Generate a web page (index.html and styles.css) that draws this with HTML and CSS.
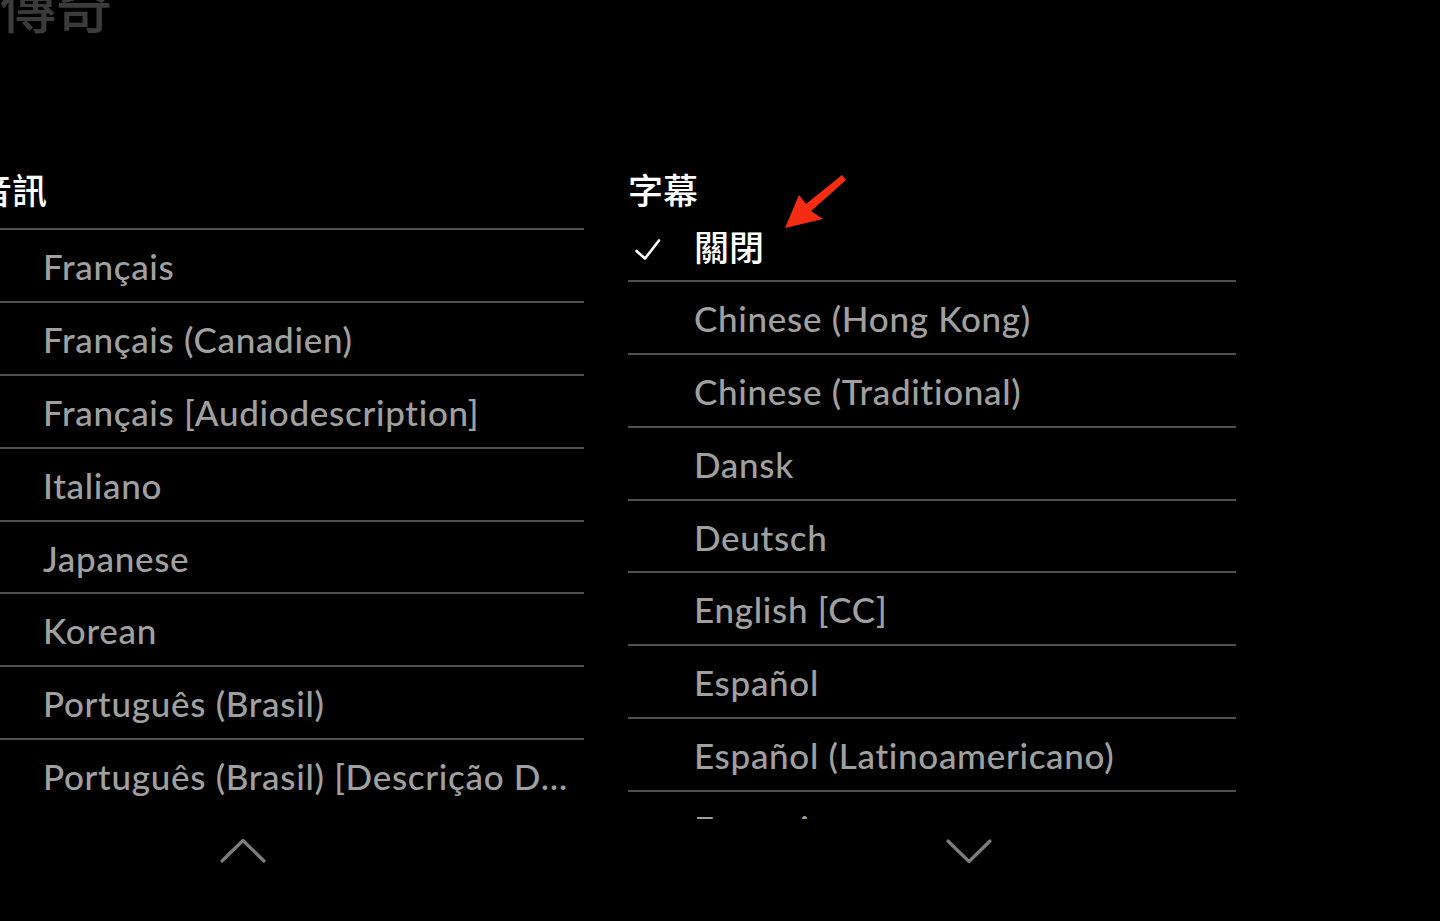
FILE: index.html
```html
<!DOCTYPE html>
<html lang="zh-Hant">
<head>
<meta charset="utf-8">
<title>音訊與字幕</title>
<link rel="stylesheet" href="styles.css">
</head>
<body>
<div class="page">
  <h1 class="title">傳奇</h1>
  <div class="columns">
    <section class="col">
      <h2 class="col-head">音訊</h2>
      <div class="viewport">
        <ul class="list list--scrolled">
          <li class="row"><span class="mark"></span><span class="label">Français</span></li>
          <li class="row"><span class="mark"></span><span class="label">Français (Canadien)</span></li>
          <li class="row"><span class="mark"></span><span class="label">Français [Audiodescription]</span></li>
          <li class="row"><span class="mark"></span><span class="label">Italiano</span></li>
          <li class="row"><span class="mark"></span><span class="label">Japanese</span></li>
          <li class="row"><span class="mark"></span><span class="label">Korean</span></li>
          <li class="row"><span class="mark"></span><span class="label">Português (Brasil)</span></li>
          <li class="row row--last"><span class="mark"></span><span class="label">Português (Brasil) [Descrição Dublada]</span></li>
        </ul>
      </div>
      <div class="pager pager--up">
        <svg class="chev" width="48" height="26" viewBox="0 0 48 26"><path d="M3 23 L24 2.5 L45 23" fill="none" stroke="#7d7d7d" stroke-width="3.2" stroke-linecap="round" stroke-linejoin="round"/></svg>
      </div>
    </section>
    <section class="col">
      <h2 class="col-head">字幕</h2>
      <div class="viewport">
        <ul class="list">
          <li class="row row--selected"><span class="mark"><svg class="check" width="28" height="24" viewBox="0 0 28 24"><path d="M2.5 13 L11 20.5 L25 2.5" fill="none" stroke="#fff" stroke-width="2.6" stroke-linecap="round" stroke-linejoin="round"/></svg></span><span class="label">關閉</span></li>
          <li class="row"><span class="mark"></span><span class="label">Chinese (Hong Kong)</span></li>
          <li class="row"><span class="mark"></span><span class="label">Chinese (Traditional)</span></li>
          <li class="row"><span class="mark"></span><span class="label">Dansk</span></li>
          <li class="row"><span class="mark"></span><span class="label">Deutsch</span></li>
          <li class="row"><span class="mark"></span><span class="label">English [CC]</span></li>
          <li class="row"><span class="mark"></span><span class="label">Español</span></li>
          <li class="row"><span class="mark"></span><span class="label">Español (Latinoamericano)</span></li>
          <li class="row"><span class="mark"></span><span class="label">Français</span></li>
        </ul>
      </div>
      <div class="pager pager--down">
        <svg class="chev" width="48" height="26" viewBox="0 0 48 26"><path d="M3 3 L24 23.5 L45 3" fill="none" stroke="#7d7d7d" stroke-width="3.2" stroke-linecap="round" stroke-linejoin="round"/></svg>
      </div>
    </section>
  </div>
</div>
<svg class="annot-arrow" width="70" height="64" viewBox="0 0 70 64"><polygon points="5,58 19,25 26,34 62,5 66,10 31,41 43,49" fill="#f42c14"/></svg>
</body>
</html>
```

FILE: styles.css
```css
html, body {
  margin: 0;
  padding: 0;
  background: #000;
}
body {
  width: 1440px;
  height: 921px;
  overflow: hidden;
  position: relative;
  font-family: Lato, "Noto Sans CJK TC", sans-serif;
  color: #a0a0a0;
}
.page {
  display: flex;
  flex-direction: column;
}
.title {
  margin: -24px 0 0 0;
  font-family: "Noto Sans CJK TC", sans-serif;
  font-size: 56px;
  line-height: 56px;
  font-weight: 500;
  color: #3b3b3b;
  white-space: nowrap;
}
.columns {
  display: grid;
  grid-template-columns: 607px 608px;
  column-gap: 44px;
  margin-left: -23px;
  padding-top: 137px;
}
.col {
  display: flex;
  flex-direction: column;
  min-width: 0;
}
.col-head {
  margin: 0;
  height: 40px;
  font-family: "Noto Sans CJK TC", sans-serif;
  font-size: 35px;
  line-height: 40px;
  font-weight: 500;
  color: #fff;
  white-space: nowrap;
}
.viewport {
  height: 610px;
  overflow: hidden;
}
.list {
  list-style: none;
  margin: 0;
  padding: 0;
}
.list--scrolled {
  margin-top: 19px;
  border-top: 2px solid #505050;
}
.row {
  display: flex;
  align-items: flex-start;
  box-sizing: border-box;
  height: 72.9px;
  padding-top: 3px;
  border-bottom: 2px solid #505050;
  font-size: 35px;
  font-weight: 500;
  line-height: 67.9px;
  overflow: hidden;
}
.row--last {
  border-bottom: 0;
}
.mark {
  flex: none;
  width: 66px;
}
.check {
  display: block;
  margin: 26px 0 0 6px;
}
.label {
  flex: 1;
  min-width: 0;
  padding-right: 4px;
  white-space: nowrap;
  overflow: hidden;
  text-overflow: ellipsis;
  letter-spacing: 0.7px;
}
.row--selected .label {
  color: #fff;
  font-family: "Noto Sans CJK TC", sans-serif;
  font-weight: 500;
  letter-spacing: 0;
}
.pager {
  display: flex;
  padding-top: 19px;
}
.pager--up {
  padding-left: 242px;
}
.pager--down {
  padding-left: 317px;
}
.chev {
  display: block;
}
.annot-arrow {
  position: absolute;
  left: 780px;
  top: 170px;
}
```
